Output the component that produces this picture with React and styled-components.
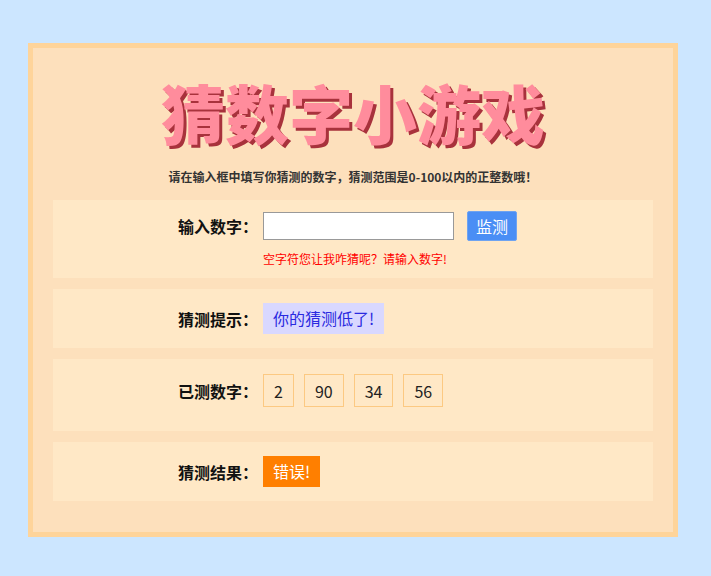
import React from "react";
import styled, { createGlobalStyle } from "styled-components";

const Global = createGlobalStyle`
  body {
    margin: 0;
    background: #cce6ff;
    font-family: "Noto Sans CJK SC", "Liberation Sans", sans-serif;
  }
`;

const Page = styled.div`
  padding: 43px 33px 0 28px;
`;

const Box = styled.div`
  width: 600px;
  border: 5px solid #fed49a;
  background: #fde0bc;
  padding: 22px 20px 31px 20px;
`;

const Title = styled.h1`
  margin: 0;
  text-align: center;
  font-size: 64px;
  line-height: 82px;
  font-weight: 900;
  color: #ff8c9c;
  text-shadow: 3px 3px 0 #a8323c;
  letter-spacing: 0;
`;

const Sub = styled.p`
  margin: 16px 0 15px;
  text-align: center;
  font-size: 12px;
  font-weight: bold;
  color: #333;
`;

const Row = styled.div`
  background: #ffe8c6;
  padding: ${p => p.pad || "14px"} 0 ${p => p.padB || p.pad || "14px"} 125px;
  margin-bottom: 11px;
  &:last-child { margin-bottom: 0; }
`;

const Line = styled.div`
  display: flex;
  align-items: center;
`;

const Label = styled.span`
  width: 85px;
  font-size: 16px;
  font-weight: bold;
  color: #111;
`;

const Input = styled.input`
  width: 191px;
  height: 28px;
  box-sizing: border-box;
  border: 1px solid #999;
  background: #fff;
`;

const Button = styled.button`
  margin-left: 13px;
  height: 30px;
  padding: 0 8px;
  border: 1px solid #6fa3f0;
  border-radius: 2px;
  background: #4a8ef5;
  color: #fff;
  font-size: 16px;
  font-family: inherit;
`;

const Err = styled.div`
  margin: 9px 0 0 85px;
  font-size: 12px;
  color: #ff0000;
`;

const Tag = styled.span`
  display: inline-block;
  padding: 0 10px;
  line-height: 31px;
  font-size: 16px;
  background: ${p => p.bg};
  color: ${p => p.fg};
`;

const Num = styled.span`
  box-sizing: border-box;
  min-width: 30px;
  height: 33px;
  margin-right: 10px;
  padding: 0 10px;
  border: 1px solid #fcc982;
  display: inline-flex;
  align-items: center;
  justify-content: center;
  font-size: 16px;
  color: #222;
`;

export default function App() {
  return (
    <Page>
      <Global />
      <Box>
        <Title>猜数字小游戏</Title>
        <Sub>请在输入框中填写你猜测的数字，猜测范围是0-100以内的正整数哦！</Sub>
        <Row pad="11px">
          <Line>
            <Label>输入数字：</Label>
            <Input />
            <Button>监测</Button>
          </Line>
          <Err>空字符您让我咋猜呢？请输入数字!</Err>
        </Row>
        <Row>
          <Line>
            <Label>猜测提示：</Label>
            <Tag bg="#d9d8ff" fg="#2a2ae0">你的猜测低了!</Tag>
          </Line>
        </Row>
        <Row pad="15px" padB="24px">
          <Line>
            <Label>已测数字：</Label>
            {[2, 90, 34, 56].map(n => <Num key={n}>{n}</Num>)}
          </Line>
        </Row>
        <Row>
          <Line>
            <Label>猜测结果：</Label>
            <Tag bg="#ff7f00" fg="#fff">错误!</Tag>
          </Line>
        </Row>
      </Box>
    </Page>
  );
}
